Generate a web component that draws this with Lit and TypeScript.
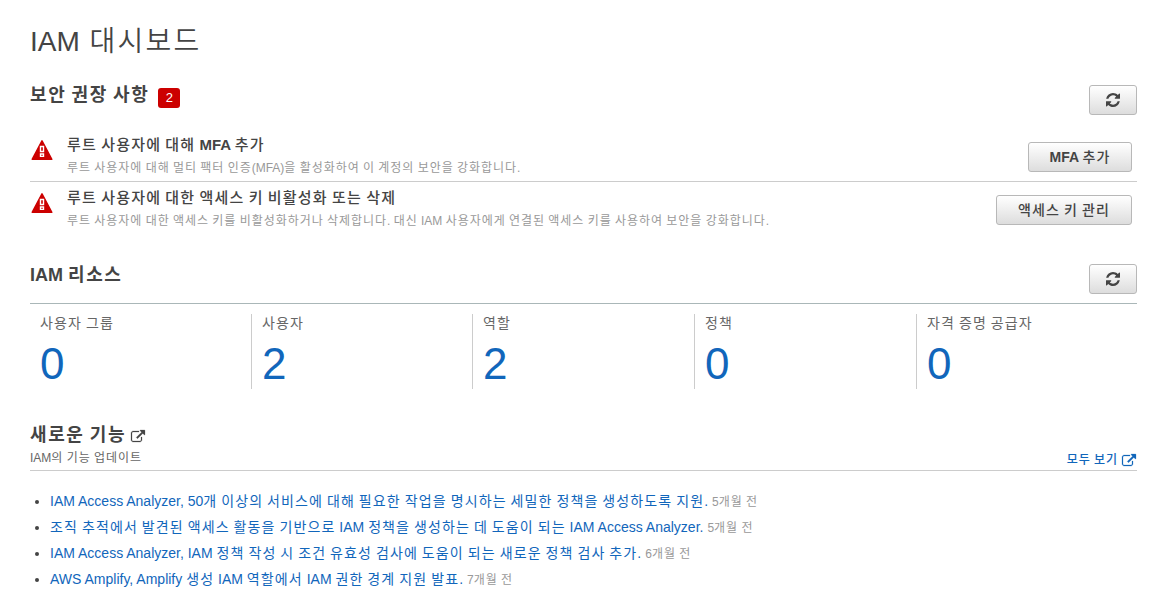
import { LitElement, html, css, svg } from 'lit'
import { customElement, property } from 'lit/decorators.js'

const refreshIcon = svg`<path d="M1511 1056q0 5-1 7-64 268-268 434.5T764 1664q-146 0-282.5-55T238 1452l-129 129q-19 19-45 19t-45-19T0 1536v-448q0-26 19-45t45-19h448q26 0 45 19t19 45-19 45l-137 137q71 66 161 102t187 36q134 0 250-65t186-179q11-17 53-117 8-23 30-23h192q13 0 22.5 9.5t9.5 22.5zM1536 256v448q0 26-19 45t-45 19h-448q-26 0-45-19t-19-45 19-45l138-138Q969 384 768 384q-134 0-250 65T332 628q-11 17-53 117-8 23-30 23H50q-13 0-22.5-9.5T18 736v-7q65-268 270-434.5T768 128q146 0 284 55.5T1297 340l130-129q19-19 45-19t45 19 19 45z"/>`

const externalIcon = svg`<path d="M1408 928v320q0 119-84.500 203.500T1120 1536H288q-119 0-203.500-84.500T0 1248V416q0-119 84.500-203.500T288 128h704q14 0 23 9t9 23v64q0 14-9 23t-23 9H288q-66 0-113 47t-47 113v832q0 66 47 113t113 47h832q66 0 113-47t47-113V928q0-14 9-23t23-9h64q14 0 23 9t9 23zm384-864v512q0 26-19 45t-45 19-45-19l-176-176-652 652q-10 10-23 10t-23-10L695 983q-10-10-10-23t10-23l652-652-176-176q-19-19-19-45t19-45 45-19h512q26 0 45 19t19 45z"/>`

const ko = (text: string) => text
  .split(/([가-힣][가-힣 ]*)/)
  .map((part, i) => i % 2 ? html`<span class="ko">${part}</span>` : part)

@customElement('external-link-icon')
export class ExternalLinkIcon extends LitElement {
  static styles = css`
    :host { display: inline-flex; }
    svg { width: 14px; height: 12px; fill: currentColor; stroke: currentColor; stroke-width: 30; overflow: visible; }
  `

  render() {
    return html`<svg viewBox="0 0 1792 1536">${externalIcon}</svg>`
  }
}

@customElement('iam-button')
export class IamButton extends LitElement {
  static styles = css`
    :host { display: block; flex: none; }
    button {
      align-items: center;
      background: linear-gradient(#fff, #ddd);
      border: 1px solid #b8b8b8;
      border-radius: 3px;
      box-sizing: border-box;
      color: #444;
      display: flex;
      font: bold 14px/28px "Liberation Sans", "Noto Sans CJK KR", sans-serif;
      height: 30px;
      justify-content: center;
      padding: 0;
      width: 100%;
      white-space: nowrap;
    }
    svg { display: block; flex: none; width: 14px; height: 14px; fill: #444; }
  `

  @property({ type: Boolean }) refresh = false

  render() {
    return html`<button>
      ${this.refresh ? html`<svg viewBox="0 128 1536 1536">${refreshIcon}</svg>` : html`<span><slot></slot></span>`}
    </button>`
  }
}

@customElement('app-root')
export class AppRoot extends LitElement {
  static styles = css`
    :host {
      background: #fff;
      box-sizing: border-box;
      color: #444;
      display: block;
      font-family: "Liberation Sans", "Noto Sans CJK KR", sans-serif;
      height: 597px;
      overflow: hidden;
      padding: 21px 12px 0 30px;
    }
    h1, h2, h3, p, ul { margin: 0; padding: 0; }
    h1 { font-size: 28px; font-weight: 350; line-height: 42px; word-spacing: 2px; }
    h2 { font-size: 18px; line-height: 22px; white-space: nowrap; }
    .ko { letter-spacing: 0.08em; word-spacing: -0.08em; }
    h2 .ko { letter-spacing: 0.09em; }
    h3 .ko, iam-button .ko, .all .ko { font-weight: 500; }
    .head { display: flex; justify-content: space-between; }
    .head iam-button { width: 48px; }
    .security { margin-top: 22px; height: 44px; }
    .security h2 { line-height: 20px; }
    .title { display: flex; gap: 9px; }
    .badge {
      background: #c00;
      border-radius: 3px;
      color: #fff;
      font-size: 13px;
      height: 20px;
      line-height: 20px;
      margin-top: 3px;
      text-align: center;
      width: 22px;
    }
    .alert { box-sizing: border-box; display: flex; height: 52px; padding: 5px 5px 0 1px; }
    .alert + .alert { border-top: 1px solid #ccc; height: 54px; }
    .warning { flex: none; width: 22px; height: 21px; margin: 6px 14px 0 0; }
    .alert div { flex: 1; }
    .alert iam-button { margin-top: 8px; }
    .alert h3 { font-size: 15px; line-height: 21px; }
    .alert p { color: #999; font-size: 12px; line-height: 25px; margin-top: 1px; white-space: nowrap; }
    .mfa { width: 104px; }
    .keys { width: 136px; }
    .resources { border-bottom: 1px solid #aab7b8; height: 39px; margin-top: 29px; }
    .cells { display: grid; grid-template-columns: 221px 221px 222px 222px 1fr; margin-top: 10px; }
    .cell { box-sizing: border-box; height: 75px; padding-left: 10px; }
    .cell + .cell { border-left: 1px solid #ccc; }
    .label { color: #666; font-size: 14px; line-height: 18px; }
    .count { color: #1166bb; font-size: 44px; line-height: 64px; }
    .news { align-items: flex-end; border-bottom: 1px solid #ccc; height: 46px; margin-top: 35px; }
    .news .title { align-items: center; gap: 5px; }
    .title external-link-icon { margin-top: 2px; }
    .news p { color: #666; font-size: 12px; line-height: 24px; }
    .all { align-items: center; color: #1166bb; display: flex; font-size: 12px; font-weight: bold; gap: 4px; line-height: 20px; padding-right: 1px; }
    ul { list-style: none; margin-top: 17px; }
    li { color: #999; display: flex; font-size: 12px; height: 26px; line-height: 26px; white-space: nowrap; align-items: baseline; }
    li::before { align-self: center; background: #444; border-radius: 50%; content: ""; height: 4px; margin: 1px 11px 0 5px; width: 4px; }
    li a { color: #1166bb; font-size: 14px; margin-right: 4px; }
  `

  alerts = [
    { title: '루트 사용자에 대해 MFA 추가', text: '루트 사용자에 대해 멀티 팩터 인증(MFA)을 활성화하여 이 계정의 보안을 강화합니다.', action: 'MFA 추가', size: 'mfa' },
    { title: '루트 사용자에 대한 액세스 키 비활성화 또는 삭제', text: '루트 사용자에 대한 액세스 키를 비활성화하거나 삭제합니다. 대신 IAM 사용자에게 연결된 액세스 키를 사용하여 보안을 강화합니다.', action: '액세스 키 관리', size: 'keys' },
  ]

  resources = [
    { label: '사용자 그룹', count: 0 },
    { label: '사용자', count: 2 },
    { label: '역할', count: 2 },
    { label: '정책', count: 0 },
    { label: '자격 증명 공급자', count: 0 },
  ]

  news = [
    { text: 'IAM Access Analyzer, 50개 이상의 서비스에 대해 필요한 작업을 명시하는 세밀한 정책을 생성하도록 지원.', age: '5개월 전' },
    { text: '조직 추적에서 발견된 액세스 활동을 기반으로 IAM 정책을 생성하는 데 도움이 되는 IAM Access Analyzer.', age: '5개월 전' },
    { text: 'IAM Access Analyzer, IAM 정책 작성 시 조건 유효성 검사에 도움이 되는 새로운 정책 검사 추가.', age: '6개월 전' },
    { text: 'AWS Amplify, Amplify 생성 IAM 역할에서 IAM 권한 경계 지원 발표.', age: '7개월 전' },
  ]

  render() {
    return html`
      <h1>${ko('IAM 대시보드')}</h1>
      <div class="head security">
        <div class="title"><h2>${ko('보안 권장 사항')}</h2><span class="badge">2</span></div>
        <iam-button refresh></iam-button>
      </div>
      ${this.alerts.map(a => html`
        <div class="alert">
          <svg class="warning" viewBox="0 0 22 21">
            <path fill="#c00" stroke="#c00" stroke-linejoin="round" stroke-width="1.500" d="M11 .8 20.800 19.300H1.200z"/>
            <path fill="none" stroke="#fff" stroke-width="1.400" d="M9.500 6.500h3v5h-3zM9.500 14h3v2.400h-3z"/>
          </svg>
          <div><h3>${ko(a.title)}</h3><p>${ko(a.text)}</p></div>
          <iam-button class=${a.size}>${ko(a.action)}</iam-button>
        </div>
      `)}
      <div class="head resources">
        <h2>${ko('IAM 리소스')}</h2>
        <iam-button refresh></iam-button>
      </div>
      <div class="cells">
        ${this.resources.map(r => html`
          <div class="cell"><div class="label">${ko(r.label)}</div><div class="count">${r.count}</div></div>
        `)}
      </div>
      <div class="head news">
        <div>
          <div class="title"><h2>${ko('새로운 기능')}</h2><external-link-icon></external-link-icon></div>
          <p>${ko('IAM의 기능 업데이트')}</p>
        </div>
        <a class="all"><span>${ko('모두 보기')}</span><external-link-icon></external-link-icon></a>
      </div>
      <ul>
        ${this.news.map(n => html`<li><a>${ko(n.text)}</a><span>${ko(n.age)}</span></li>`)}
      </ul>
    `
  }
}
